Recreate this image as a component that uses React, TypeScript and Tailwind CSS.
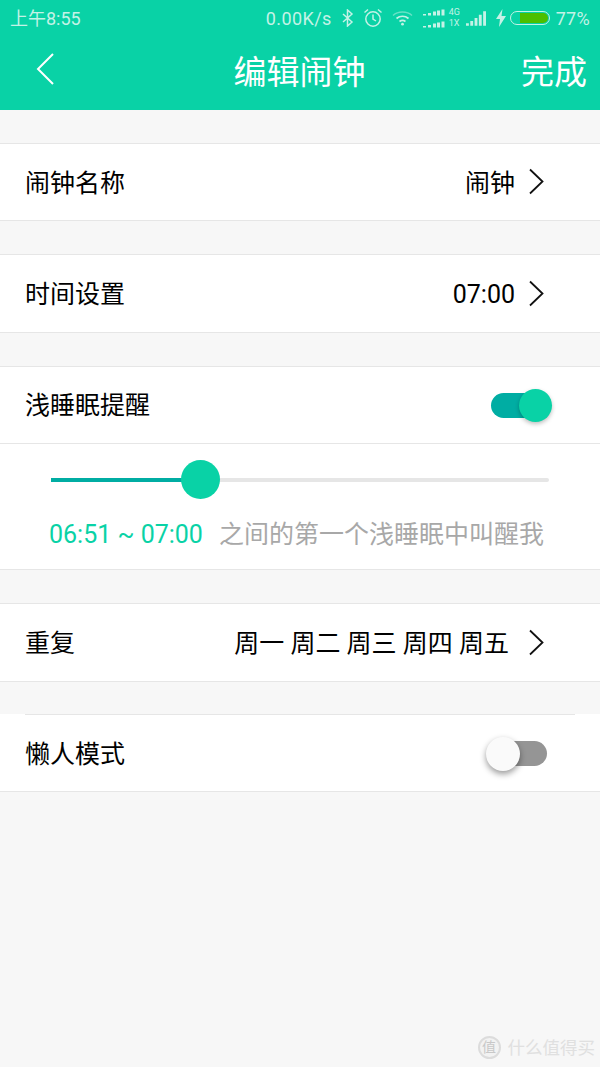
const cjk = { fontFamily: 'Roboto, "Noto Sans CJK SC", sans-serif' }

function Chevron() {
  return (
    <svg className="ml-[12px] h-[28px] w-[18px]" viewBox="0 0 18 28" fill="none" stroke="#111" strokeWidth={1.8}>
      <path d="M3 1.500l12.500 12L3 25.500" />
    </svg>
  )
}

function Row({ label, value, gap = 0, tall = false }: { label: string; value: string; gap?: number; tall?: boolean }) {
  return (
    <div className={`mt-[33px] flex items-center justify-between border-y border-[#e6e6e6] bg-white pl-[25px] pr-[55px] ${tall ? 'h-[79px]' : 'h-[78px]'}`}>
      <span className={`text-[25px] text-black ${tall ? 'pt-[2px]' : 'pt-[4px]'}`}>{label}</span>
      <div className="flex items-center">
        <span className={`text-[25px] text-black ${tall ? 'pt-[2px]' : 'pt-[4px]'}`} style={{ marginRight: gap }}>{value}</span>
        <Chevron />
      </div>
    </div>
  )
}

function StatusIcons() {
  return (
    <div className="flex items-center">
      {/* bluetooth */}
      <svg className="ml-[10px] h-[18px] w-[12px]" viewBox="0 0 12 18" fill="none" stroke="#c4f2e6" strokeWidth={1.5}>
        <path d="M1 5l9 8-4.500 4V1L10 5l-9 8" />
      </svg>
      {/* alarm */}
      <svg className="ml-[9px] h-[20px] w-[20px]" viewBox="0 0 20 20" fill="none" stroke="#c4f2e6" strokeWidth={1.5}>
        <circle cx="10" cy="11" r="7.200" />
        <path d="M10 6.500V11l3 2M1.500 4.500L5 1.500M18.500 4.500L15 1.500" />
      </svg>
      {/* wifi */}
      <svg className="ml-[9px] h-[16px] w-[21px]" viewBox="0 0 21 16" fill="none" stroke="#c4f2e6">
        <path d="M1 5.500C6 .8 15 .8 20 5.500" strokeWidth={1.5} opacity={0.5} />
        <path d="M4.500 8.500c3.500-3 8.500-3 12 0" strokeWidth={1.7} />
        <path d="M7.500 11.500c2-1.400 4-1.400 6 0" strokeWidth={1.7} />
        <circle cx="10.500" cy="14.200" r="1.400" fill="#c4f2e6" stroke="none" />
      </svg>
      {/* dual sim bars */}
      <svg className="ml-[10px] h-[20px] w-[22px]" viewBox="0 0 22 20" fill="#c4f2e6">
        <path d="M0 6h3v1.500H0zM5 5h3v2.500H5zM10 3.500h3v4h-3zM14 2.500h3v5h-3zM18.500 1.500h3v6h-3z" />
        <path d="M0 18h3v1.500H0zM5 17h3v2.500H5zM10 15.500h3v4h-3zM14 14.500h3v5h-3zM18.500 13.500h3v6h-3z" />
      </svg>
      <div className="ml-[4px] flex w-[12px] flex-col text-[9px] leading-[11px] text-[#c4f2e6]">
        <span>4G</span>
        <span>1X</span>
      </div>
      {/* signal */}
      <svg className="ml-[5px] h-[15px] w-[20px]" viewBox="0 0 21 15" fill="#c4f2e6">
        <path d="M0 12.500h3V15H0zM4.500 10h3v5h-3zM9 7h3v8H9zM13.500 3.500h3V15h-3zM18 0h3v15h-3z" />
      </svg>
      {/* charging bolt */}
      <svg className="ml-[10px] h-[18px] w-[10px]" viewBox="0 0 10 18" fill="#c4f2e6">
        <path d="M6.500 0L0 10h4l-1 8 7-11H5.500z" />
      </svg>
      {/* battery */}
      <div className="ml-[4px] flex h-[14px] w-[40px] items-center rounded-full border border-[#c4f2e6] pl-[9px] pr-[1px]">
        <div className="h-[10px] w-full rounded-r-full bg-[#4cbf00]" />
      </div>
      <span className="ml-[6px] text-[18px] tracking-[0.3px] text-[#c4f2e6]">77%</span>
    </div>
  )
}

export default function App() {
  return (
    <div className="flex min-h-[1067px] w-[600px] flex-col overflow-hidden bg-[#f7f7f7]" style={cjk}>
      {/* Header */}
      <header className="h-[110px] bg-[#09d2a6]">
        <div className="flex h-[36px] items-center justify-between pl-[10px] pr-[10px]">
          <span className="text-[18px] text-[#c4f2e6]">上午8:55</span>
          <div className="flex items-center">
            <span className="text-[18px] tracking-[0.4px] text-[#c4f2e6]">0.00K/s</span>
            <StatusIcons />
          </div>
        </div>
        <div className="flex h-[70px] items-center justify-between pl-[35px] pr-[13px]">
          <svg className="mb-[4px] h-[34px] w-[20px]" viewBox="0 0 20 34" fill="none" stroke="#fff" strokeWidth={2}>
            <path d="M18 2L3 17l15 15" />
          </svg>
          <span className="ml-[23px] pt-[4px] text-[33px] font-normal text-white">编辑闹钟</span>
          <span className="pt-[4px] text-[33px] font-normal text-white">完成</span>
        </div>
      </header>

      <Row label="闹钟名称" value="闹钟" />
      <Row label="时间设置" value="07:00" tall />

      {/* Light sleep reminder */}
      <section className="mt-[33px] border-y border-[#e6e6e6] bg-white">
        <div className="flex h-[77px] items-center justify-between border-b border-[#e6e6e6] pl-[25px] pr-[52px]">
          <span className="pt-[2px] text-[25px] text-black">浅睡眠提醒</span>
          <div className="relative h-[25px] w-[57px] rounded-full bg-[#00ada3]">
            <div className="absolute right-[-4px] top-[-4px] h-[33px] w-[33px] rounded-full bg-[#09d2a6] shadow-[0_2px_4px_rgba(0,0,0,0.25)]" />
          </div>
        </div>
        <div className="h-[125px] pl-[51px] pt-[26px]">
          <div className="relative mt-[8px] h-[4px] w-[498px] rounded-full bg-[#e6e6e6]">
            <div className="h-[4px] w-[140px] bg-[#00ada3]" />
            <div className="absolute left-[130px] top-[-18px] h-[39px] w-[39px] rounded-full bg-[#09d2a6]" />
          </div>
          <div className="-ml-[2px] mt-[35px] flex items-center whitespace-nowrap text-[25px] leading-[36px]">
            <span className="text-[#09d2a6]">06:51 ~ 07:00</span>
            <span className="ml-[16px] text-[#a8a8a8]">之间的第一个浅睡眠中叫醒我</span>
          </div>
        </div>
      </section>

      <Row label="重复" value="周一 周二 周三 周四 周五" gap={6} tall />

      {/* Lazy mode */}
      <section className="mt-[32px] bg-white">
        <div className="ml-[25px] mr-[25px] border-t border-[#e6e6e6]" />
        <div className="flex h-[77px] items-center justify-between border-b border-[#e6e6e6] pl-[25px] pr-[53px]">
          <span className="pt-[4px] text-[25px] text-black">懒人模式</span>
          <div className="relative h-[25px] w-[57px] rounded-full bg-[#959595]">
            <div className="absolute left-[-4px] top-[-4px] h-[34px] w-[34px] rounded-full bg-[#fafafa] shadow-[0_3px_6px_rgba(0,0,0,0.4)]" />
          </div>
        </div>
      </section>

      {/* Watermark */}
      <div className="mt-auto flex items-center justify-end pb-[6px] pr-[5px]">
        <div className="flex h-[23px] w-[23px] items-center justify-center rounded-full border-2 border-[#dcdcdc] bg-[#f2f2f2] text-[14px] text-[#c8c8c8]">值</div>
        <span className="ml-[7px] text-[17.500px] text-[#e0e0e0]">什么值得买</span>
      </div>
    </div>
  )
}
